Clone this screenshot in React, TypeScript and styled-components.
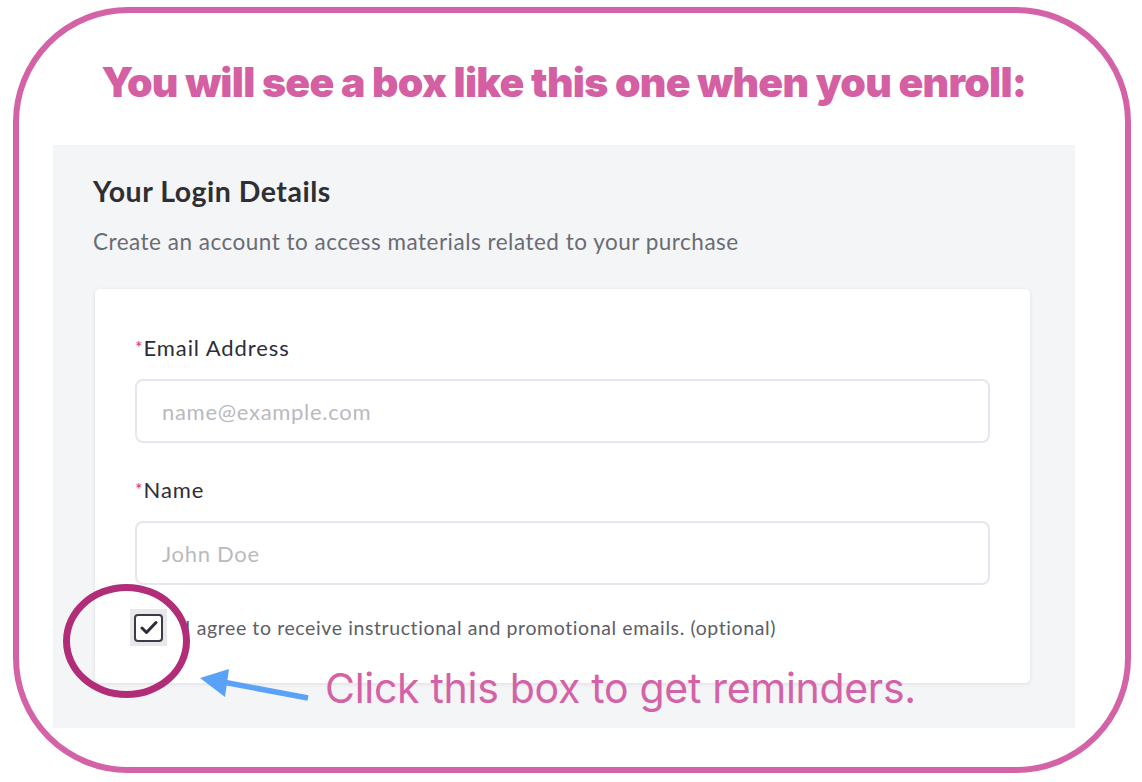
import React from "react";
import styled, { createGlobalStyle } from "styled-components";

const Global = createGlobalStyle`
  html, body { margin: 0; padding: 0; background: #ffffff; }
  body { width: 1142px; height: 782px; overflow: hidden; }
  * { box-sizing: border-box; }
`;

const Page = styled.div`
  width: 1142px;
  height: 782px;
  padding: 7px 11px 9px 13px;
  position: relative;
`;

const Frame = styled.div`
  width: 100%;
  height: 100%;
  border: 6px solid #d462a6;
  border-radius: 115px;
  display: flex;
  flex-direction: column;
  padding: 0 50px 39px 34px;
`;

const Title = styled.h1`
  margin: 45px 0 0 0;
  height: 87px;
  text-align: center;
  font-family: Inter, "Liberation Sans", sans-serif;
  font-weight: 900;
  font-size: 41px;
  line-height: 48px;
  letter-spacing: -0.75px;
  color: #d45fa3;
`;

const Panel = styled.section`
  flex: 1;
  background: #f4f5f7;
  padding: 30px 45px 45px 40px;
  display: flex;
  flex-direction: column;
  font-family: Lato, "Liberation Sans", sans-serif;
`;

const PanelTitle = styled.h2`
  margin: 0;
  font-size: 28.5px;
  line-height: 32px;
  font-weight: 700;
  letter-spacing: 0.5px;
  color: #2e2f33;
`;

const PanelSub = styled.p`
  margin: 21px 0 0 0;
  font-size: 22.5px;
  line-height: 28px;
  letter-spacing: 0.5px;
  color: #6a6c75;
`;

const Card = styled.div`
  margin: 33px 0 0 2px;
  flex: 1;
  background: #ffffff;
  border-radius: 5px;
  box-shadow: 0 1px 4px rgba(20, 20, 40, 0.1);
  padding: 43px 40px 37px 40px;
  display: flex;
  flex-direction: column;
`;

const Label = styled.label<{ $first?: boolean }>`
  display: block;
  margin-top: ${(p) => (p.$first ? 0 : 31)}px;
  font-size: 22px;
  line-height: 30px;
  letter-spacing: 0.9px;
  color: #2c2d3a;
`;

const Req = styled.span`
  color: #c2316e;
  font-size: 18px;
  vertical-align: 2px;
`;

const Input = styled.input`
  display: block;
  width: 100%;
  height: 64px;
  margin-top: 16px;
  border: 2px solid #e6e6ee;
  border-radius: 8px;
  padding: 0 25px;
  font-family: Lato, "Liberation Sans", sans-serif;
  font-size: 22px;
  letter-spacing: 0.7px;
  color: #2c2d3a;
  background: #fff;
  outline: none;
  &::placeholder { color: #b9bac0; }
`;

const CheckRow = styled.div`
  display: flex;
  align-items: center;
  gap: 18px;
  margin: 24px 0 0 -5px;
`;

const BoxWrap = styled.div`
  width: 37px;
  height: 37px;
  background: #e8e8ea;
  display: flex;
  align-items: center;
  justify-content: center;
`;

const Box = styled.div`
  width: 29px;
  height: 28px;
  border: 2px solid #3a3b48;
  border-radius: 4px;
  background: #fff;
  display: flex;
  align-items: center;
  justify-content: center;
`;

const CheckText = styled.span`
  font-size: 19.5px;
  letter-spacing: 0.6px;
  color: #5c5e66;
`;

const Circle = styled.div`
  position: absolute;
  left: 63px;
  top: 584px;
  width: 127px;
  height: 114px;
  border: 7px solid #b12d78;
  border-radius: 50%;
`;

const Arrow = styled.svg`
  position: absolute;
  left: 195px;
  top: 660px;
`;

const Hint = styled.div`
  position: absolute;
  left: 325px;
  top: 664px;
  font-family: Inter, "Liberation Sans", sans-serif;
  font-size: 41px;
  line-height: 48px;
  font-weight: 400;
  color: #d462a6;
  letter-spacing: -0.3px;
`;

export default function App() {
  return (
    <>
      <Global />
      <Page>
        <Frame>
          <Title>You will see a box like this one when you enroll:</Title>
          <Panel>
            <PanelTitle>Your Login Details</PanelTitle>
            <PanelSub>Create an account to access materials related to your purchase</PanelSub>
            <Card>
              <Label $first>
                <Req>*</Req>Email Address
              </Label>
              <Input placeholder="name@example.com" />
              <Label>
                <Req>*</Req>Name
              </Label>
              <Input placeholder="John Doe" />
              <CheckRow>
                <BoxWrap>
                  <Box>
                    <svg width="18" height="15" viewBox="0 0 18 15">
                      <path d="M2 8 L6.5 12.5 L16 2.5" fill="none" stroke="#2c2d3a" strokeWidth="3" strokeLinecap="round" strokeLinejoin="round" />
                    </svg>
                  </Box>
                </BoxWrap>
                <CheckText>I agree to receive instructional and promotional emails. (optional)</CheckText>
              </CheckRow>
            </Card>
          </Panel>
        </Frame>
        <Circle />
        <Arrow width="120" height="45" viewBox="0 0 120 45">
          <line x1="113" y1="38" x2="28" y2="22" stroke="#5aa2f8" strokeWidth="5.5" />
          <polygon points="5,18 34,9 30,37" fill="#5aa2f8" />
        </Arrow>
        <Hint>Click this box to get reminders.</Hint>
      </Page>
    </>
  );
}
